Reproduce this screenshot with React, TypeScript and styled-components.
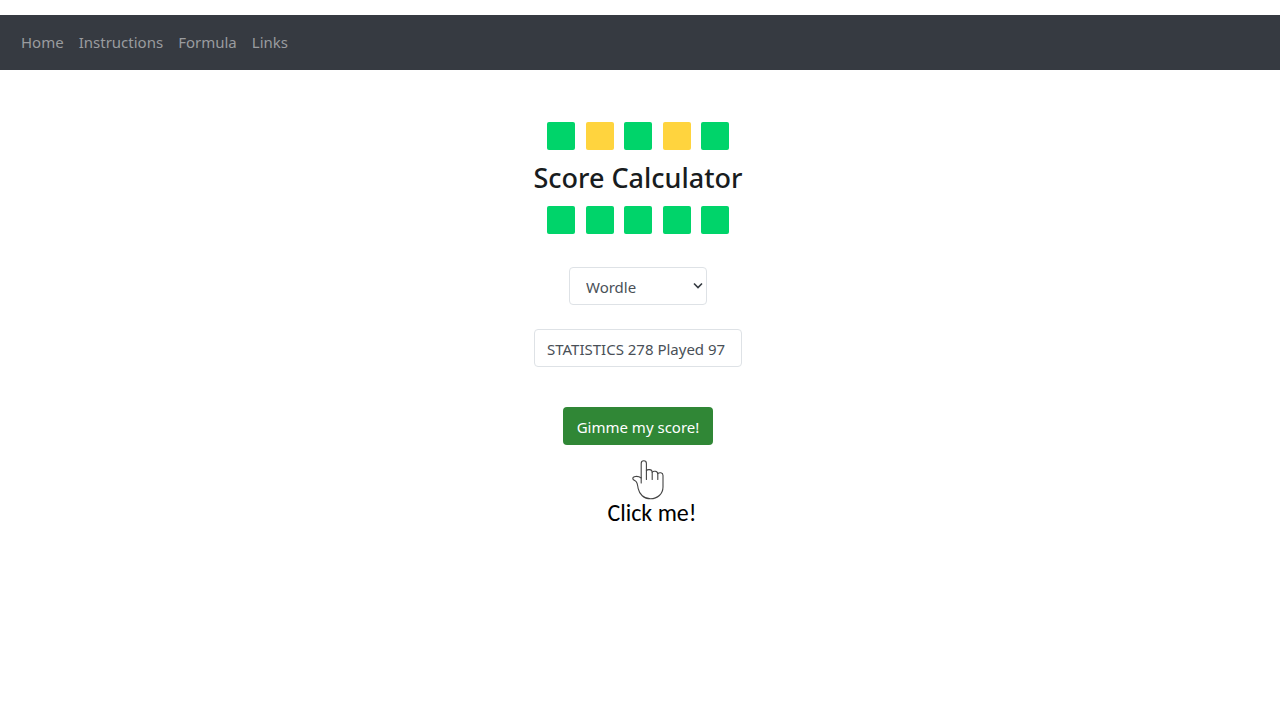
import React from "react";
import styled, { createGlobalStyle } from "styled-components";

const GlobalStyle = createGlobalStyle`
  *, *::before, *::after { box-sizing: border-box; }
  body {
    margin: 0;
    background: #fff;
    color: #212529;
    font: 400 15px/24px "Noto Sans", "Open Sans", sans-serif;
  }
`;

const NavBar = styled.nav`
  display: flex;
  gap: 15px;
  margin-top: 15px;
  padding: 15px 21px 16px;
  background: #363a41;
`;

const NavLink = styled.a`
  color: #9a9c9f;
  text-decoration: none;
`;

const Main = styled.main`
  display: flex;
  flex-direction: column;
  align-items: center;
  padding: 52px 4px 24px 0;
`;

const TileRow = styled.div`
  display: flex;
  justify-content: space-between;
  width: 182px;
`;

const Tile = styled.span<{ $present?: boolean }>`
  width: 28px;
  height: 28px;
  border-radius: 2px;
  background: ${(p) => (p.$present ? "#ffd43e" : "#00d46a")};
`;

const Title = styled.h1`
  margin: 10px 0;
  color: #181c20;
  font-size: 27px;
  font-weight: 500;
  line-height: 36px;
`;

const Form = styled.form`
  display: flex;
  flex-direction: column;
  align-items: center;
  margin-top: 33px;
`;

const SelectWrap = styled.div`
  display: grid;
  align-items: center;
  width: 138px;

  & > * { grid-area: 1 / 1; }
`;

const Select = styled.select`
  appearance: none;
  width: 100%;
  height: 38px;
  padding: 2px 24px 0 16px;
  border: 1px solid #dee2e6;
  border-radius: 4px;
  background: #fff;
  color: #495057;
  font: inherit;
`;

const Chevron = styled.svg`
  justify-self: end;
  margin-right: 4px;
  pointer-events: none;
`;

const TextInput = styled.input`
  width: 208px;
  height: 38px;
  margin-top: 24px;
  padding: 2px 12px 0;
  border: 1px solid #dee2e6;
  border-radius: 4px;
  background: #fff;
  color: #495057;
  font: inherit;
`;

const SubmitButton = styled.button`
  width: 150px;
  height: 38px;
  margin-top: 40px;
  padding: 2px 0 0;
  border: 0;
  border-radius: 4px;
  background: #308736;
  color: #fff;
  font: inherit;
  white-space: nowrap;
`;

const Hint = styled.div`
  display: flex;
  flex-direction: column;
  align-items: center;
  margin-top: 15px;
  padding-left: 28px;
`;

const Hand = styled.svg`
  margin-right: 8px;
`;

const HintText = styled.p`
  margin: 0;
  color: #000;
  font: 400 24px/26px Carlito, Lato, sans-serif;
`;

const links = ["Home", "Instructions", "Formula", "Links"];

function Tiles({ pattern }: { pattern: string }) {
  return (
    <TileRow aria-hidden="true">
      {pattern.split("").map((c, i) => (
        <Tile key={i} $present={c === "y"} />
      ))}
    </TileRow>
  );
}

export default function App() {
  return (
    <>
      <GlobalStyle />
      <NavBar>
        {links.map((name) => (
          <NavLink key={name} href={`#${name.toLowerCase()}`}>
            {name}
          </NavLink>
        ))}
      </NavBar>
      <Main>
        <Tiles pattern="gygyg" />
        <Title>Score Calculator</Title>
        <Tiles pattern="ggggg" />
        <Form onSubmit={(e) => e.preventDefault()}>
          <SelectWrap>
            <Select aria-label="Game" defaultValue="Wordle">
              <option>Wordle</option>
            </Select>
            <Chevron width="10" height="8" viewBox="0 0 10 8" fill="none" stroke="#343a40" strokeWidth="1.6">
              <path d="M1 1.5 L5 5.5 L9 1.5" />
            </Chevron>
          </SelectWrap>
          <TextInput aria-label="Statistics" defaultValue="STATISTICS 278 Played 97" />
          <SubmitButton type="submit">Gimme my score!</SubmitButton>
        </Form>
        <Hint>
          <Hand width="32" height="40" viewBox="0 0 32 40" fill="none" stroke="#444" strokeWidth="1.1" strokeLinecap="round" strokeLinejoin="round">
            <path d="M9.2 23V3.4C9.2 1.8 10.3.8 11.8.8s2.6 1 2.6 2.6V19.5" />
            <path d="M14.4 10.6C15.2 9.3 19.9 8.8 20.2 12V19.5" />
            <path d="M20.2 12.2C21.2 10.8 25.6 10.6 25.8 13.8V19.5" />
            <path d="M25.8 13.6C27.2 12.2 31 12.2 31 15.4V27C31 34 25.4 38.8 18.6 38.8C11.6 38.8 7.4 34 6.2 28.6C5.6 25.6 5.6 23.2 4.2 21.6C3.2 20.4.8 20.2.8 18.4C.8 16.6 5.4 15.2 9.2 18" />
          </Hand>
          <HintText>Click me!</HintText>
        </Hint>
      </Main>
    </>
  );
}
